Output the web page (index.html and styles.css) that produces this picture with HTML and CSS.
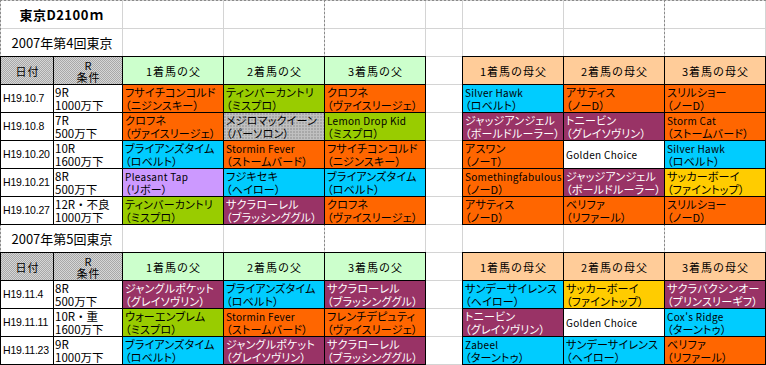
FILE: index.html
```html
<!DOCTYPE html>
<html lang="ja">
<head>
<meta charset="utf-8">
<title>東京D2100m</title>
<link rel="stylesheet" href="styles.css">
</head>
<body>
<div class="sheet">
  <div class="cell span2 title"><span>東京D2100ｍ</span></div>
  <div class="cell"></div><div class="cell"></div><div class="cell"></div><div class="cell"></div><div class="cell"></div><div class="cell"></div><div class="cell"></div>

  <div class="cell span2 sub"><span>2007年第4回東京</span></div>
  <div class="cell"></div><div class="cell"></div><div class="cell"></div><div class="cell"></div><div class="cell"></div><div class="cell"></div><div class="cell"></div>

  <div class="cell b pat hc"><span>日付</span></div>
  <div class="cell b pat hc"><span>R</span><span>条件</span></div>
  <div class="cell b hf hc"><span>1着馬の父</span></div>
  <div class="cell b hf hc"><span>2着馬の父</span></div>
  <div class="cell b hf hc"><span>3着馬の父</span></div>
  <div class="cell"></div>
  <div class="cell b hm hc"><span>1着馬の母父</span></div>
  <div class="cell b hm hc"><span>2着馬の母父</span></div>
  <div class="cell b hm hc"><span>3着馬の母父</span></div>

  <div class="cell b date"><span>H19.10.7</span></div>
  <div class="cell b cond"><span>9R</span><span>1000万下</span></div>
  <div class="cell b or"><span>フサイチコンコルド</span><span>（ニジンスキー）</span></div>
  <div class="cell b yg"><span>ティンバーカントリ</span><span>（ミスプロ）</span></div>
  <div class="cell b or"><span>クロフネ</span><span>（ヴァイスリージェ）</span></div>
  <div class="cell"></div>
  <div class="cell b cy"><span class="lat">Silver Hawk</span><span>（ロベルト）</span></div>
  <div class="cell b or"><span>アサティス</span><span>（ノーD）</span></div>
  <div class="cell b or"><span>スリルショー</span><span>（ノーD）</span></div>

  <div class="cell b date"><span>H19.10.8</span></div>
  <div class="cell b cond"><span>7R</span><span>500万下</span></div>
  <div class="cell b or"><span>クロフネ</span><span>（ヴァイスリージェ）</span></div>
  <div class="cell b gp"><span>メジロマックイーン</span><span>（パーソロン）</span></div>
  <div class="cell b yg"><span class="lat">Lemon Drop Kid</span><span>（ミスプロ）</span></div>
  <div class="cell"></div>
  <div class="cell b mr"><span>ジャッジアンジェル</span><span>（ボールドルーラー）</span></div>
  <div class="cell b mr"><span>トニービン</span><span>（グレイソヴリン）</span></div>
  <div class="cell b or"><span class="lat">Storm Cat</span><span>（ストームバード）</span></div>

  <div class="cell b date"><span>H19.10.20</span></div>
  <div class="cell b cond"><span>10R</span><span>1600万下</span></div>
  <div class="cell b cy"><span>ブライアンズタイム</span><span>（ロベルト）</span></div>
  <div class="cell b or"><span class="lat">Stormin Fever</span><span>（ストームバード）</span></div>
  <div class="cell b or"><span>フサイチコンコルド</span><span>（ニジンスキー）</span></div>
  <div class="cell"></div>
  <div class="cell b or"><span>アスワン</span><span>（ノーT）</span></div>
  <div class="cell b wh"><span class="lat">Golden Choice</span></div>
  <div class="cell b cy"><span class="lat">Silver Hawk</span><span>（ロベルト）</span></div>

  <div class="cell b date"><span>H19.10.21</span></div>
  <div class="cell b cond"><span>8R</span><span>500万下</span></div>
  <div class="cell b lv"><span class="lat">Pleasant Tap</span><span>（リボー）</span></div>
  <div class="cell b cy"><span>フジキセキ</span><span>（ヘイロー）</span></div>
  <div class="cell b cy"><span>ブライアンズタイム</span><span>（ロベルト）</span></div>
  <div class="cell"></div>
  <div class="cell b or"><span class="lat">Somethingfabulous</span><span>（ノーD）</span></div>
  <div class="cell b mr"><span>ジャッジアンジェル</span><span>（ボールドルーラー）</span></div>
  <div class="cell b ye"><span>サッカーボーイ</span><span>（ファイントップ）</span></div>

  <div class="cell b date"><span>H19.10.27</span></div>
  <div class="cell b cond"><span>12R・不良</span><span>1000万下</span></div>
  <div class="cell b yg"><span>ティンバーカントリ</span><span>（ミスプロ）</span></div>
  <div class="cell b mr"><span>サクラローレル</span><span>（ブラッシンググル）</span></div>
  <div class="cell b or"><span>クロフネ</span><span>（ヴァイスリージェ）</span></div>
  <div class="cell"></div>
  <div class="cell b or"><span>アサティス</span><span>（ノーD）</span></div>
  <div class="cell b or"><span>ベリファ</span><span>（リファール）</span></div>
  <div class="cell b or"><span>スリルショー</span><span>（ノーD）</span></div>

  <div class="cell span2 sub"><span>2007年第5回東京</span></div>
  <div class="cell"></div><div class="cell"></div><div class="cell"></div><div class="cell"></div><div class="cell"></div><div class="cell"></div><div class="cell"></div>

  <div class="cell b pat hc"><span>日付</span></div>
  <div class="cell b pat hc"><span>R</span><span>条件</span></div>
  <div class="cell b hf hc"><span>1着馬の父</span></div>
  <div class="cell b hf hc"><span>2着馬の父</span></div>
  <div class="cell b hf hc"><span>3着馬の父</span></div>
  <div class="cell"></div>
  <div class="cell b hm hc"><span>1着馬の母父</span></div>
  <div class="cell b hm hc"><span>2着馬の母父</span></div>
  <div class="cell b hm hc"><span>3着馬の母父</span></div>

  <div class="cell b date"><span>H19.11.4</span></div>
  <div class="cell b cond"><span>8R</span><span>500万下</span></div>
  <div class="cell b mr"><span>ジャングルポケット</span><span>（グレイソヴリン）</span></div>
  <div class="cell b cy"><span>ブライアンズタイム</span><span>（ロベルト）</span></div>
  <div class="cell b mr"><span>サクラローレル</span><span>（ブラッシンググル）</span></div>
  <div class="cell"></div>
  <div class="cell b cy"><span>サンデーサイレンス</span><span>（ヘイロー）</span></div>
  <div class="cell b ye"><span>サッカーボーイ</span><span>（ファイントップ）</span></div>
  <div class="cell b mr"><span>サクラバクシンオー</span><span>（プリンスリーギフ）</span></div>

  <div class="cell b date"><span>H19.11.11</span></div>
  <div class="cell b cond"><span>10R・重</span><span>1600万下</span></div>
  <div class="cell b yg"><span>ウォーエンブレム</span><span>（ミスプロ）</span></div>
  <div class="cell b or"><span class="lat">Stormin Fever</span><span>（ストームバード）</span></div>
  <div class="cell b or"><span>フレンチデピュティ</span><span>（ヴァイスリージェ）</span></div>
  <div class="cell"></div>
  <div class="cell b mr"><span>トニービン</span><span>（グレイソヴリン）</span></div>
  <div class="cell b wh"><span class="lat">Golden Choice</span></div>
  <div class="cell b cy"><span class="lat">Cox's Ridge</span><span>（ターントゥ）</span></div>

  <div class="cell b date"><span>H19.11.23</span></div>
  <div class="cell b cond"><span>9R</span><span>1000万下</span></div>
  <div class="cell b cy"><span>ブライアンズタイム</span><span>（ロベルト）</span></div>
  <div class="cell b mr"><span>ジャングルポケット</span><span>（グレイソヴリン）</span></div>
  <div class="cell b mr"><span>サクラローレル</span><span>（ブラッシンググル）</span></div>
  <div class="cell"></div>
  <div class="cell b cy"><span class="lat">Zabeel</span><span>（ターントゥ）</span></div>
  <div class="cell b cy"><span>サンデーサイレンス</span><span>（ヘイロー）</span></div>
  <div class="cell b or"><span>ベリファ</span><span>（リファール）</span></div>
</div>
</body>
</html>
```

FILE: styles.css
```css
* { box-sizing: border-box; }

html, body {
  margin: 0;
  padding: 0;
  background: #ffffff;
}

body {
  font-family: "Noto Sans CJK JP", sans-serif;
  color: #000;
}

.sheet {
  display: grid;
  grid-template-columns: 52px 68px 100px 100px 100px 36px 100px 100px 100px;
  grid-auto-rows: 27px;
  gap: 1px;
  padding: 1px;
  width: 766px;
  background:
    linear-gradient(#8a8a8a 50%, transparent 0) 324px 0 / 1px 4px repeat-y,
    linear-gradient(#8a8a8a 50%, transparent 0) 664px 0 / 1px 4px repeat-y,
    linear-gradient(#8a8a8a 50%, transparent 0) 0 0 / 1px 4px repeat-y,
    linear-gradient(90deg, #8a8a8a 50%, transparent 0) 0 0 / 4px 1px repeat-x,
    #d4d4d4;
}

.cell {
  background: #ffffff;
  display: flex;
  flex-direction: column;
  justify-content: center;
  align-items: flex-start;
  padding: 0 1px 0 2px;
  font-size: 11px;
  line-height: 13px;
  white-space: nowrap;
  font-feature-settings: "palt";
  letter-spacing: 0.2px;
}

.cell > span { display: block; }

.span2 { grid-column: span 2; align-items: center; }

.title {
  font-size: 13px;
  font-weight: bold;
  letter-spacing: 0.5px;
}

.sub {
  font-size: 13px;
  font-feature-settings: normal;
  letter-spacing: 0;
}

.b { outline: 1px solid #000; }

.hc {
  align-items: center;
  text-align: center;
  font-size: 11px;
  line-height: 12px;
  font-feature-settings: normal;
  letter-spacing: 1px;
}

.pat {
  background-color: #d6d6d6;
  background-image: conic-gradient(#a8a8a8 25%, transparent 0 50%, #a8a8a8 0 75%, transparent 0);
  background-size: 2px 2px;
}

.gp {
  background-color: #c0c0c0;
  background-image: radial-gradient(circle at 1px 1px, #8c8c8c 0.6px, transparent 0.8px);
  background-size: 3px 3px;
}

.hf { background: #ccffcc; }
.hm { background: #ffcc99; }

.date {
  font-family: "Liberation Sans", sans-serif;
  font-size: 10.5px;
  letter-spacing: -0.2px;
}

.cond {
  font-size: 11.5px;
  font-feature-settings: normal;
  letter-spacing: 0;
  padding-left: 1px;
}

.lat {
  font-size: 10px;
  letter-spacing: 0.3px;
}

.or { background: #ff6600; }
.yg { background: #99cc00; }
.cy { background: #00ccff; }
.mr { background: #993366; color: #ffffff; }
.lv { background: #cc99ff; }
.ye { background: #ffcc00; }
.wh { background: #ffffff; }
```
